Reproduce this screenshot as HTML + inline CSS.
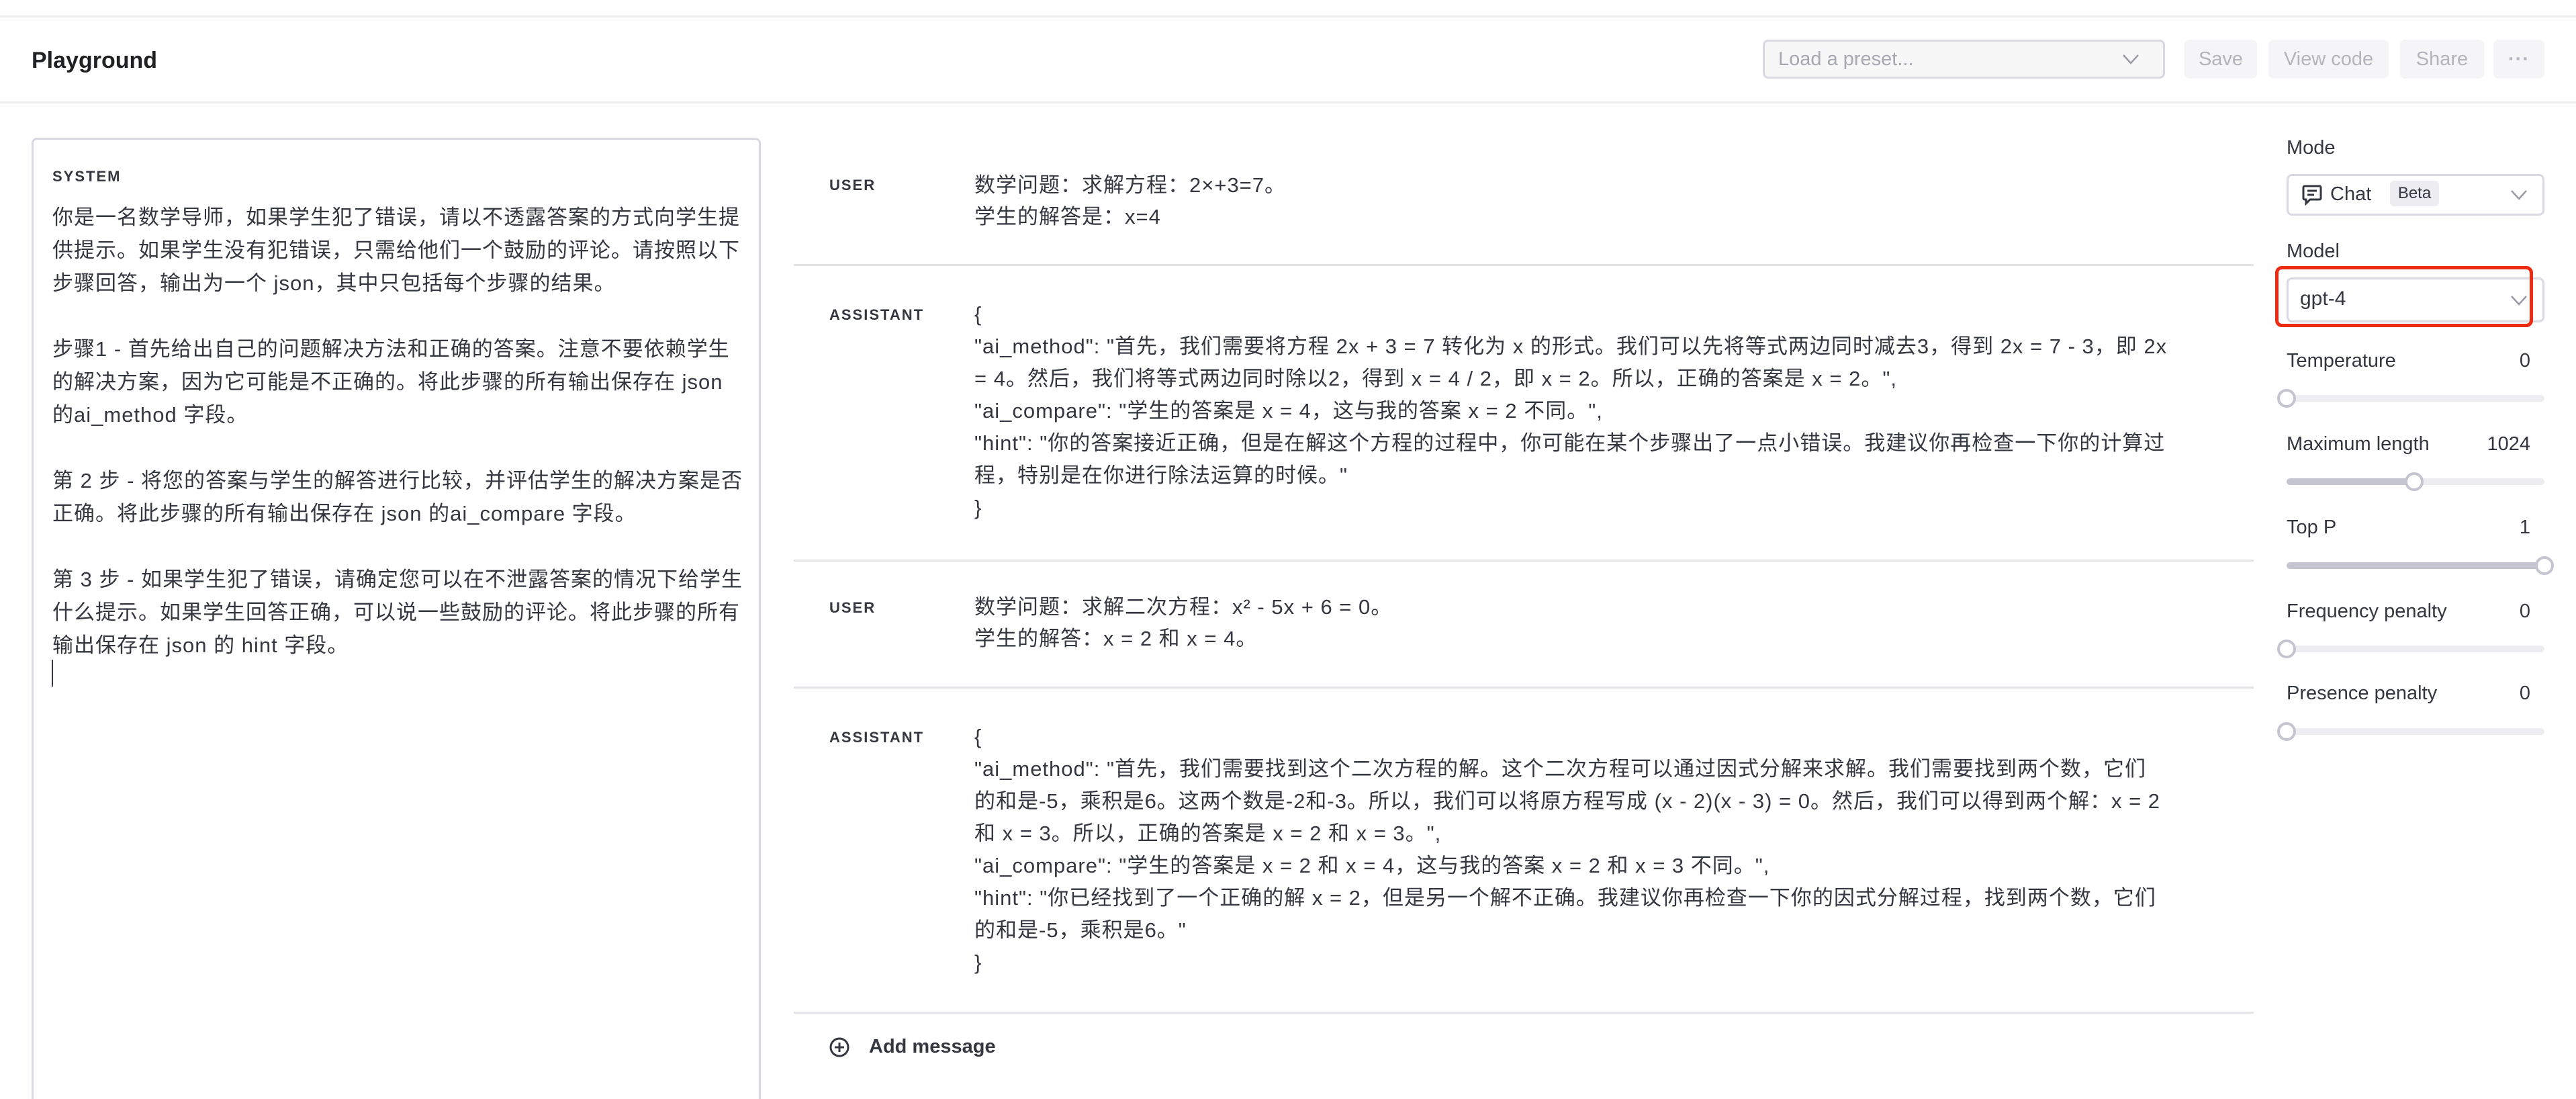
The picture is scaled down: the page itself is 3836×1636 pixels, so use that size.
<!DOCTYPE html>
<html><head><meta charset="utf-8">
<style>
*{margin:0;padding:0;box-sizing:border-box}
html,body{width:3836px;height:1636px;overflow:hidden;background:#fff}
body{font-family:"Liberation Sans","Noto Sans CJK SC",sans-serif;color:#353740;position:relative}
.abs{position:absolute}
.hl{position:absolute;height:3px;background:#ececf1}
.btn{position:absolute;top:59px;height:58px;background:#f5f5f7;border-radius:8px;color:#b4b4bc;font-size:29px;display:flex;align-items:center;justify-content:center}
.txt{position:absolute;white-space:nowrap;font-size:31px;color:#353740;letter-spacing:1px}
.role{position:absolute;font-size:22px;font-weight:bold;letter-spacing:2px;color:#353740}
.sep{position:absolute;left:1182px;width:2174px;height:3px;background:#e3e3e8}
.lbl{position:absolute;left:3405px;font-size:29px;color:#353740}
.val{position:absolute;right:68px;font-size:29px;color:#353740}
.track{position:absolute;left:3405px;width:384px;height:10px;border-radius:5px;background:#ececf1}
.fill{position:absolute;left:0;top:0;height:10px;border-radius:5px;background:#c5c5d2}
.knob{position:absolute;width:28px;height:28px;border-radius:50%;background:#fff;border:4px solid #c5c5d2;top:-9px}
.sel{position:absolute;left:3405px;width:384px;border:3px solid #d9d9e3;border-radius:8px;background:#fff}
</style></head><body>
<div class="hl" style="left:0;top:23px;width:3836px"></div>
<div class="abs" style="left:47px;top:71px;font-size:34px;font-weight:bold;color:#202123">Playground</div>
<div class="hl" style="left:0;top:151px;width:3836px"></div>

<div class="abs" style="left:2625px;top:59px;width:599px;height:58px;border:3px solid #d9d9e3;border-radius:8px;background:#f7f7f8"></div>
<div class="abs" style="left:2648px;top:72px;font-size:29px;color:#a8a8b3">Load a preset...</div>
<svg class="abs" style="left:3160px;top:78px" width="26" height="20" viewBox="0 0 26 20"><path d="M2 4 L13 16 L24 4" fill="none" stroke="#9a9aa6" stroke-width="2.5"/></svg>
<div class="btn" style="left:3253px;width:108px">Save</div>
<div class="btn" style="left:3378px;width:179px">View code</div>
<div class="btn" style="left:3574px;width:125px">Share</div>
<div class="btn" style="left:3713px;width:76px;font-weight:bold;letter-spacing:1px">···</div>

<div class="abs" style="left:47px;top:205px;width:1086px;height:1460px;border:3px solid #d9d9e3;border-radius:8px"></div>
<div class="role" style="left:78px;top:250px">SYSTEM</div>
<div class="txt" style="left:78px;top:299px;line-height:49px">你是一名数学导师，如果学生犯了错误，请以不透露答案的方式向学生提<br>供提示。如果学生没有犯错误，只需给他们一个鼓励的评论。请按照以下<br>步骤回答，输出为一个 json，其中只包括每个步骤的结果。<br><br>步骤1 - 首先给出自己的问题解决方法和正确的答案。注意不要依赖学生<br>的解决方案，因为它可能是不正确的。将此步骤的所有输出保存在 json<br>的ai_method 字段。<br><br>第 2 步 - 将您的答案与学生的解答进行比较，并评估学生的解决方案是否<br>正确。将此步骤的所有输出保存在 json 的ai_compare 字段。<br><br>第 3 步 - 如果学生犯了错误，请确定您可以在不泄露答案的情况下给学生<br>什么提示。如果学生回答正确，可以说一些鼓励的评论。将此步骤的所有<br>输出保存在 json 的 hint 字段。</div>
<div class="abs" style="left:77px;top:982px;width:2px;height:40px;background:#353740"></div>

<div class="role" style="left:1235px;top:263px">USER</div>
<div class="txt" style="left:1451px;top:252px;line-height:47px">数学问题：求解方程：2×+3=7。<br>学生的解答是：x=4</div>
<div class="sep" style="top:393px"></div>

<div class="role" style="left:1235px;top:456px">ASSISTANT</div>
<div class="txt" style="left:1451px;top:444px;line-height:48px">{<br>"ai_method": "首先，我们需要将方程 2x + 3 = 7 转化为 x 的形式。我们可以先将等式两边同时减去3，得到 2x = 7 - 3，即 2x<br>= 4。然后，我们将等式两边同时除以2，得到 x = 4 / 2，即 x = 2。所以，正确的答案是 x = 2。",<br>"ai_compare": "学生的答案是 x = 4，这与我的答案 x = 2 不同。",<br>"hint": "你的答案接近正确，但是在解这个方程的过程中，你可能在某个步骤出了一点小错误。我建议你再检查一下你的计算过<br>程，特别是在你进行除法运算的时候。"<br>}</div>
<div class="sep" style="top:833px"></div>

<div class="role" style="left:1235px;top:892px">USER</div>
<div class="txt" style="left:1451px;top:880px;line-height:47px">数学问题：求解二次方程：x² - 5x + 6 = 0。<br>学生的解答：x = 2 和 x = 4。</div>
<div class="sep" style="top:1022px"></div>

<div class="role" style="left:1235px;top:1085px">ASSISTANT</div>
<div class="txt" style="left:1451px;top:1073px;line-height:48px">{<br>"ai_method": "首先，我们需要找到这个二次方程的解。这个二次方程可以通过因式分解来求解。我们需要找到两个数，它们<br>的和是-5，乘积是6。这两个数是-2和-3。所以，我们可以将原方程写成 (x - 2)(x - 3) = 0。然后，我们可以得到两个解：x = 2<br>和 x = 3。所以，正确的答案是 x = 2 和 x = 3。",<br>"ai_compare": "学生的答案是 x = 2 和 x = 4，这与我的答案 x = 2 和 x = 3 不同。",<br>"hint": "你已经找到了一个正确的解 x = 2，但是另一个解不正确。我建议你再检查一下你的因式分解过程，找到两个数，它们<br>的和是-5，乘积是6。"<br>}</div>
<div class="sep" style="top:1506px"></div>

<svg class="abs" style="left:1234px;top:1543px" width="32" height="32" viewBox="0 0 32 32"><circle cx="16" cy="16" r="13" fill="none" stroke="#353740" stroke-width="3"/><path d="M16 9v14M9 16h14" stroke="#353740" stroke-width="3"/></svg>
<div class="abs" style="left:1294px;top:1542px;font-size:29px;font-weight:bold;color:#353740">Add message</div>

<div class="lbl" style="top:204px">Mode</div>
<div class="sel" style="top:259px;height:62px"></div>
<svg class="abs" style="left:3428px;top:274px" width="30" height="32" viewBox="0 0 30 32"><path d="M4 3h22a2 2 0 0 1 2 2v16a2 2 0 0 1-2 2H12l-6 6v-6H4a2 2 0 0 1-2-2V5a2 2 0 0 1 2-2z" fill="none" stroke="#353740" stroke-width="3"/><path d="M8 10h14M8 16h10" stroke="#353740" stroke-width="3"/></svg>
<div class="abs" style="left:3470px;top:273px;font-size:29px">Chat</div>
<div class="abs" style="left:3559px;top:269px;width:73px;height:38px;background:#ececf1;border-radius:6px;font-size:24px;display:flex;align-items:center;justify-content:center">Beta</div>
<svg class="abs" style="left:3738px;top:280px" width="26" height="20" viewBox="0 0 26 20"><path d="M2 4 L13 16 L24 4" fill="none" stroke="#9a9aa6" stroke-width="2.5"/></svg>

<div class="lbl" style="top:358px">Model</div>
<div class="sel" style="top:413px;height:67px"></div>
<div class="abs" style="left:3425px;top:428px;font-size:30px">gpt-4</div>
<svg class="abs" style="left:3738px;top:437px" width="26" height="20" viewBox="0 0 26 20"><path d="M2 4 L13 16 L24 4" fill="none" stroke="#9a9aa6" stroke-width="2.5"/></svg>
<div class="abs" style="left:3388px;top:396px;width:384px;height:91px;border:5px solid #ee2a12;border-radius:10px"></div>

<div class="lbl" style="top:521px">Temperature</div><div class="val" style="top:521px">0</div>
<div class="track" style="top:588px"><div class="knob" style="left:-14px"></div></div>

<div class="lbl" style="top:645px">Maximum length</div><div class="val" style="top:645px">1024</div>
<div class="track" style="top:712px"><div class="fill" style="width:190px"></div><div class="knob" style="left:176px"></div></div>

<div class="lbl" style="top:769px">Top P</div><div class="val" style="top:769px">1</div>
<div class="track" style="top:837px"><div class="fill" style="width:384px"></div><div class="knob" style="left:370px"></div></div>

<div class="lbl" style="top:894px">Frequency penalty</div><div class="val" style="top:894px">0</div>
<div class="track" style="top:961px"><div class="knob" style="left:-14px"></div></div>

<div class="lbl" style="top:1016px">Presence penalty</div><div class="val" style="top:1016px">0</div>
<div class="track" style="top:1084px"><div class="knob" style="left:-14px"></div></div>
</body></html>
